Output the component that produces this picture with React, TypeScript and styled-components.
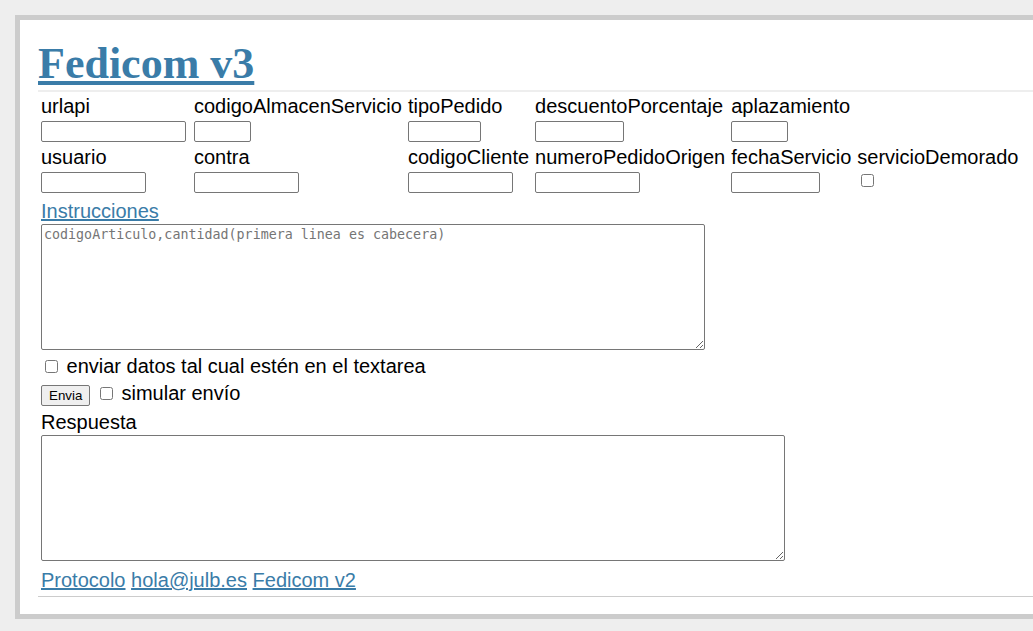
import React from "react";
import styled, { createGlobalStyle } from "styled-components";

const GlobalStyle = createGlobalStyle`
  html, body {
    margin: 0;
    background: #eee;
    overflow: hidden;
  }
  body {
    font-family: "Liberation Sans", Arial, sans-serif;
    font-size: 20px;
    color: #000;
  }
`;

const linkColor = "#3a7ca8";

const fila1 = [
  { label: "urlapi", width: 145 },
  { label: "codigoAlmacenServicio", width: 57 },
  { label: "tipoPedido", width: 73 },
  { label: "descuentoPorcentaje", width: 89 },
  { label: "aplazamiento", width: 57 },
];

const fila2 = [
  { label: "usuario", width: 105 },
  { label: "contra", width: 105 },
  { label: "codigoCliente", width: 105 },
  { label: "numeroPedidoOrigen", width: 105 },
  { label: "fechaServicio", width: 89 },
  { label: "servicioDemorado", check: true },
];

const App = () => {
  return (
    <>
      <GlobalStyle />
      <Frame>
        <Title>
          <a href="#">Fedicom v3</a>
        </Title>

        <Fields>
          {fila1.map((f) => (
            <Field key={f.label}>
              <FieldLabel>{f.label}</FieldLabel>
              <TextInput type="text" $w={f.width} />
            </Field>
          ))}
          <Field />
          {fila2.map((f) => (
            <Field key={f.label}>
              <FieldLabel>{f.label}</FieldLabel>
              {f.check ? (
                <FieldCheck type="checkbox" />
              ) : (
                <TextInput type="text" $w={f.width} />
              )}
            </Field>
          ))}
        </Fields>

        <Section $top={3}>
          <Link href="#">Instrucciones</Link>
          <Area
            $w={664}
            placeholder="codigoArticulo,cantidad(primera linea es cabecera)"
          />
        </Section>

        <OptionRow $top={5}>
          <Check type="checkbox" /> enviar datos tal cual estén en el textarea
        </OptionRow>
        <OptionRow $top={4}>
          <SendButton>Envia</SendButton> <Check type="checkbox" /> simular envío
        </OptionRow>

        <Section $top={5}>
          <PlainLabel>Respuesta</PlainLabel>
          <Area $w={744} />
        </Section>

        <Footer>
          <Link href="#">Protocolo</Link> <Link href="#">hola@julb.es</Link>{" "}
          <Link href="#">Fedicom v2</Link>
        </Footer>
      </Frame>
    </>
  );
};

const Frame = styled.div`
  margin: 15px 0 0 15px;
  width: 1100px;
  background: #fff;
  border: 5px solid #ccc;
  padding: 0 18px 17px;
`;

const Title = styled.h1`
  margin: 0;
  padding-top: 18px;
  font-family: "Liberation Serif", "Times New Roman", serif;
  font-weight: bold;
  font-size: 44px;
  line-height: 52px;
  border-bottom: 2px solid #eee;
  a {
    color: ${linkColor};
    text-decoration: underline;
  }
`;

const Fields = styled.div`
  display: grid;
  grid-template-columns: 147px repeat(5, max-content);
  column-gap: 6px;
  margin: 3px 0 0 3px;
`;

const Field = styled.div`
  display: flex;
  flex-direction: column;
  align-items: flex-start;
  padding-bottom: 4px;
`;

const FieldLabel = styled.span`
  line-height: 23px;
  white-space: nowrap;
`;

const TextInput = styled.input<{ $w?: number }>`
  box-sizing: border-box;
  width: ${(p) => p.$w}px;
  height: 21px;
  margin: 3px 0 0;
  border: 1px solid #767676;
  border-radius: 2px;
  padding: 1px 2px;
  font-size: 13px;
  background: #fff;
`;

const Check = styled.input`
  width: 13px;
  height: 13px;
  margin: 3px 3px 0 4px;
  vertical-align: baseline;
`;

const FieldCheck = styled(Check)`
  margin-top: 5px;
`;

const Section = styled.div<{ $top: number }>`
  margin: ${(p) => p.$top}px 0 0 3px;
  display: flex;
  flex-direction: column;
  align-items: flex-start;
`;

const Link = styled.a`
  color: ${linkColor};
  text-decoration: underline;
  line-height: 23px;
`;

const PlainLabel = styled.span`
  line-height: 23px;
`;

const Area = styled.textarea<{ $w: number }>`
  box-sizing: border-box;
  width: ${(p) => p.$w}px;
  height: 126px;
  margin-top: 1px;
  border: 1px solid #767676;
  border-radius: 2px;
  padding: 2px;
  font-family: "DejaVu Sans Mono", monospace;
  font-size: 13.33px;
  resize: both;
  &::placeholder {
    color: #757575;
  }
`;

const OptionRow = styled.div<{ $top: number }>`
  margin: ${(p) => p.$top}px 0 0 3px;
  line-height: 23px;
`;

const SendButton = styled.button`
  box-sizing: border-box;
  display: inline-block;
  height: 21px;
  padding: 1px 7px;
  font-family: "Liberation Sans", Arial, sans-serif;
  font-size: 13.33px;
  line-height: normal;
  color: #000;
  background: #efefef;
  border: 1px solid #767676;
  border-radius: 2px;
`;

const Footer = styled.div`
  margin: 8px 0 0;
  padding: 0 0 4px 3px;
  line-height: 23px;
  border-bottom: 1px solid #ccc;
`;

export default App;
